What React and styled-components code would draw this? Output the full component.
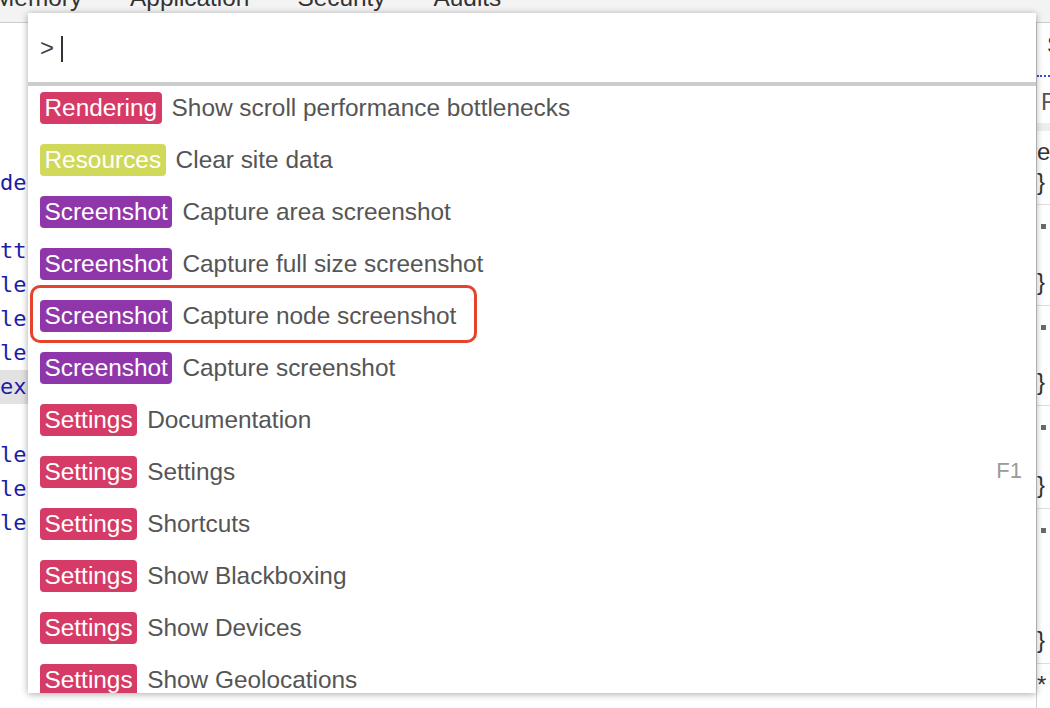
import React from 'react'
import styled, { createGlobalStyle } from 'styled-components'

const GlobalStyle = createGlobalStyle`
    html, body {
        margin: 0;
        padding: 0;
        background: #ffffff;
    }
    body {
        font-family: "Liberation Sans", Arial, sans-serif;
    }
`

const BADGE_COLORS = {
    Rendering: '#d63b68',
    Resources: '#d0d95a',
    Screenshot: '#8f37aa',
    Settings: '#d63b68',
}

const COMMANDS = [
    { category: 'Rendering', title: 'Show scroll performance bottlenecks' },
    { category: 'Resources', title: 'Clear site data' },
    { category: 'Screenshot', title: 'Capture area screenshot' },
    { category: 'Screenshot', title: 'Capture full size screenshot' },
    { category: 'Screenshot', title: 'Capture node screenshot', marked: true },
    { category: 'Screenshot', title: 'Capture screenshot' },
    { category: 'Settings', title: 'Documentation' },
    { category: 'Settings', title: 'Settings', shortcut: 'F1' },
    { category: 'Settings', title: 'Shortcuts' },
    { category: 'Settings', title: 'Show Blackboxing' },
    { category: 'Settings', title: 'Show Devices' },
    { category: 'Settings', title: 'Show Geolocations' },
]

// what peeks out on the left, behind the palette
const CODE_LINES = ['', '', '', '', 'de', '', 'tt', 'le:', 'le:', 'le:', 'ex', '', 'le:', 'le:', 'le:', '', '', '', '']

// style rules peeking out on the right
const RULES = [
    { height: 74, lines: ['e', '}'] },
    { height: 101, lines: ['.', '}'], dot: true },
    { height: 100, lines: ['.', '}'], dot: true },
    { height: 103, lines: ['.', '}'], dot: true },
    { height: 155, lines: ['.', '}'], dot: true },
    { height: 60, lines: ['*'] },
]

const Page = styled.div`
    position: relative;
    width: 1050px;
    height: 708px;
    overflow: hidden;
    background: #fff;
    display: flex;
    flex-direction: column;
`

const TabBar = styled.div`
    height: 22px;
    flex: none;
    background: #f3f3f3;
    border-bottom: 1px solid #cdcdcd;
    overflow: hidden;
    display: flex;
    gap: 48px;
`
const TabLabel = styled.span`
    font-size: 24.4px;
    line-height: 24px;
    color: #333;
    margin-top: -14px;
    white-space: nowrap;
    &:first-child { margin-left: -6px; }
`

const Main = styled.div`
    flex: 1;
    display: flex;
    min-height: 0;
`

const ElementsPanel = styled.div`
    flex: 1;
    padding-top: 7px;
    overflow: hidden;
    font-family: "DejaVu Sans Mono", "Liberation Mono", monospace;
    font-size: 22px;
    color: #1c1ca8;
`
const CodeLine = styled.div`
    height: 34px;
    line-height: 34px;
    white-space: nowrap;
    background: ${p => (p.$selected ? '#e2e2e2' : 'transparent')};
`

const StylesPanel = styled.div`
    width: 13px;
    flex: none;
    border-left: 1px solid #cfcfcf;
    overflow: hidden;
    font-size: 24px;
    color: #333;
    white-space: nowrap;
`
const StylesTab = styled.div`
    height: 52px;
    line-height: 44px;
    padding-left: 10px;
    border-bottom: 2px dotted #3652d0;
`
const FilterRow = styled.div`
    height: 46px;
    line-height: 50px;
    padding-left: 4px;
    color: #555;
`
const Band = styled.div`
    height: 8px;
    background: #ededed;
`
const Rule = styled.div`
    height: ${p => p.$height}px;
    box-sizing: border-box;
    padding: 6px 0 8px;
    border-bottom: 1px solid #dedede;
    display: flex;
    flex-direction: column;
    justify-content: space-between;
`
const RuleLine = styled.div`
    height: 30px;
    line-height: 30px;
    display: flex;
    align-items: center;
`
const Square = styled.span`
    width: 5px;
    height: 5px;
    margin-left: 4px;
    background: #6a6a6a;
`

const Palette = styled.div`
    position: absolute;
    left: 28px;
    top: 13px;
    width: 1008px;
    height: 680px;
    background: #fff;
    box-shadow: 0 1px 7px rgba(0, 0, 0, 0.35);
    overflow: hidden;
    display: flex;
    flex-direction: column;
`
const Prompt = styled.div`
    height: 69px;
    flex: none;
    border-bottom: 4px solid #cccccc;
    display: flex;
    align-items: center;
    padding: 0 12px;
    font-size: 24px;
    color: #444;
`
const Caret = styled.span`
    width: 2px;
    height: 26px;
    margin-left: 7px;
    margin-top: 2px;
    background: #333;
`

const CommandRow = styled.div`
    position: relative;
    height: 52px;
    flex: none;
    box-sizing: border-box;
    padding: 6px 14px 0 12px;
    display: flex;
    align-items: flex-start;
    font-size: 24.4px;
    line-height: 32px;
`
const Badge = styled.span`
    background: ${p => p.$color};
    color: #fff;
    border-radius: 4px;
    padding: 0 4.5px;
    height: 32px;
    white-space: nowrap;
`
const Title = styled.span`
    margin-left: 10px;
    color: #555;
    white-space: nowrap;
`
const Shortcut = styled.span`
    margin-left: auto;
    color: #9a9a9a;
    font-size: 22px;
    line-height: 30px;
`
const Marker = styled.div`
    position: absolute;
    left: 2px;
    top: -9px;
    width: 447px;
    height: 58px;
    box-sizing: border-box;
    border: 3.5px solid #e6432c;
    border-radius: 10px;
    pointer-events: none;
`

export default function App() {
    return (
        <Page>
            <GlobalStyle />
            <TabBar>
                <TabLabel>Memory</TabLabel>
                <TabLabel>Application</TabLabel>
                <TabLabel>Security</TabLabel>
                <TabLabel>Audits</TabLabel>
            </TabBar>
            <Main>
                <ElementsPanel>
                    {CODE_LINES.map((line, i) => (
                        <CodeLine key={i} $selected={i === 10}>{line}</CodeLine>
                    ))}
                </ElementsPanel>
                <StylesPanel>
                    <StylesTab>Styles</StylesTab>
                    <FilterRow>Filter</FilterRow>
                    <Band />
                    {RULES.map((rule, i) => (
                        <Rule key={i} $height={rule.height}>
                            {rule.lines.map((l, j) => (
                                <RuleLine key={j}>
                                    {rule.dot && j === 0 ? <Square /> : l}
                                </RuleLine>
                            ))}
                        </Rule>
                    ))}
                </StylesPanel>
            </Main>

            <Palette>
                <Prompt>
                    <span>&gt;</span>
                    <Caret />
                </Prompt>
                {COMMANDS.map((cmd, i) => (
                    <CommandRow key={i}>
                        <Badge $color={BADGE_COLORS[cmd.category]}>{cmd.category}</Badge>
                        <Title>{cmd.title}</Title>
                        {cmd.shortcut && <Shortcut>{cmd.shortcut}</Shortcut>}
                        {cmd.marked && <Marker />}
                    </CommandRow>
                ))}
            </Palette>
        </Page>
    )
}
